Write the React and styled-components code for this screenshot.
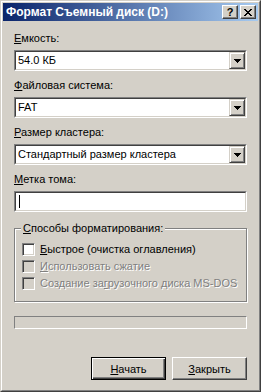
import React from "react";
import styled, { createGlobalStyle } from "styled-components";

const GlobalStyle = createGlobalStyle`
  html, body {
    margin: 0;
    padding: 0;
    background: #d4d0c8;
  }
  * {
    box-sizing: border-box;
  }
`;

const Window = styled.div`
  width: 261px;
  height: 392px;
  background: #d4d0c8;
  border: 1px solid;
  border-color: #d4d0c8 #404040 #404040 #d4d0c8;
  font-family: "Liberation Sans", Arial, sans-serif;
  font-size: 11px;
  color: #000;
`;

const Frame = styled.div`
  height: 100%;
  border: 1px solid;
  border-color: #ffffff #808080 #808080 #ffffff;
  padding: 1px;
  display: flex;
  flex-direction: column;
`;

const TitleBar = styled.div`
  height: 18px;
  flex: none;
  display: flex;
  align-items: center;
  padding: 0 2px 0 3px;
  background: linear-gradient(to right, #0a246a, #a6caf0);
  color: #fff;
  font-weight: 700;
  font-size: 12px;
`;

const TitleText = styled.span`
  flex: 1;
  white-space: nowrap;
  line-height: 18px;
`;

const CaptionButton = styled.button`
  width: 16px;
  height: 14px;
  padding: 0;
  margin-left: ${(p) => (p.$gap ? "2px" : "0")};
  background: #d4d0c8;
  border: 1px solid;
  border-color: #ffffff #404040 #404040 #ffffff;
  box-shadow: inset -1px -1px 0 #808080;
  display: flex;
  align-items: center;
  justify-content: center;
  font-family: "Liberation Sans", Arial, sans-serif;
  font-weight: 700;
  font-size: 11px;
  line-height: 12px;
  color: #000;
`;

const Client = styled.div`
  flex: 1;
  margin-top: 1px;
  padding: 10px 11px 0 11px;
  display: flex;
  flex-direction: column;
`;

const Field = styled.div`
  display: flex;
  flex-direction: column;
  gap: 5px;
  margin-bottom: 8px;
`;

const Label = styled.div`
  height: 13px;
  line-height: 13px;
  white-space: nowrap;
  color: ${(p) => (p.$disabled ? "#808080" : "#000")};
  text-shadow: ${(p) => (p.$disabled ? "1px 1px 0 #fff" : "none")};
`;

const Sunken = styled.div`
  height: 21px;
  border: 1px solid;
  border-color: #808080 #ffffff #ffffff #808080;
  background: #fff;
`;

const SunkenInner = styled.div`
  height: 100%;
  border: 1px solid;
  border-color: #404040 #d4d0c8 #d4d0c8 #404040;
  display: flex;
  align-items: center;
`;

const ComboValue = styled.span`
  flex: 1;
  padding-left: 2px;
  line-height: 13px;
  white-space: nowrap;
`;

const DropButton = styled.div`
  width: 16px;
  height: 17px;
  background: #d4d0c8;
  border: 1px solid;
  border-color: #d4d0c8 #404040 #404040 #d4d0c8;
  box-shadow: inset 1px 1px 0 #fff, inset -1px -1px 0 #808080;
  display: flex;
  align-items: center;
  justify-content: center;
`;

const Caret = styled.span`
  width: 1px;
  height: 13px;
  margin-left: 3px;
  background: #000;
`;

const Group = styled.div`
  position: relative;
  margin-top: 8px;
  height: 74px;
  border: 1px solid #808080;
  box-shadow: inset 1px 1px 0 #fff, 1px 1px 0 #fff;
  padding: 12px 0 0 7px;
  display: flex;
  flex-direction: column;
`;

const Legend = styled.span`
  position: absolute;
  top: -7px;
  left: 6px;
  padding: 0 2px;
  background: #d4d0c8;
  line-height: 13px;
  white-space: nowrap;
`;

const CheckRow = styled.div`
  height: 17px;
  display: flex;
  align-items: center;
  gap: 5px;
`;

const CheckBox = styled.span`
  width: 13px;
  height: 13px;
  flex: none;
  border: 1px solid;
  border-color: #808080 #ffffff #ffffff #808080;
  background: ${(p) => (p.$disabled ? "#d4d0c8" : "#fff")};
  box-shadow: inset 1px 1px 0 #404040, inset -1px -1px 0 #d4d0c8;
`;

const Progress = styled.div`
  margin-top: 14px;
  height: 13px;
  border: 1px solid;
  border-color: #808080 #ffffff #ffffff #808080;
`;

const ButtonRow = styled.div`
  margin-top: 28px;
  display: flex;
  justify-content: flex-end;
  gap: 6px;
`;

const Button = styled.button`
  width: 75px;
  height: 23px;
  padding: 0;
  background: #d4d0c8;
  font-family: "Liberation Sans", Arial, sans-serif;
  font-size: 11px;
  color: #000;
  border: 1px solid;
  border-color: ${(p) =>
    p.$default ? "#000" : "#ffffff #404040 #404040 #ffffff"};
  box-shadow: ${(p) =>
    p.$default
      ? "inset 1px 1px 0 #fff, inset -1px -1px 0 #404040, inset -2px -2px 0 #808080"
      : "inset -1px -1px 0 #808080"};
`;

const Arrow = () => (
  <svg width="7" height="4" viewBox="0 0 7 4" shapeRendering="crispEdges">
    <rect x="0" y="0" width="7" height="1" fill="#000" />
    <rect x="1" y="1" width="5" height="1" fill="#000" />
    <rect x="2" y="2" width="3" height="1" fill="#000" />
    <rect x="3" y="3" width="1" height="1" fill="#000" />
  </svg>
);

const CloseGlyph = () => {
  const rows = [
    [0, 1, 6, 7],
    [1, 2, 5, 6],
    [2, 3, 4, 5],
    [3, 4],
    [2, 3, 4, 5],
    [1, 2, 5, 6],
    [0, 1, 6, 7],
  ];
  return (
    <svg width="8" height="7" viewBox="0 0 8 7" shapeRendering="crispEdges">
      {rows.map((cols, y) =>
        cols.map((x) => (
          <rect key={`${x}-${y}`} x={x} y={y} width="1" height="1" fill="#000" />
        ))
      )}
    </svg>
  );
};

const Combo = ({ value }) => (
  <Sunken>
    <SunkenInner>
      <ComboValue>{value}</ComboValue>
      <DropButton>
        <Arrow />
      </DropButton>
    </SunkenInner>
  </Sunken>
);

const options = [
  { key: "quick", label: <><u>Б</u>ыстрое (очистка оглавления)</>, disabled: false },
  { key: "compress", label: <><u>И</u>спользовать сжатие</>, disabled: true },
  { key: "boot", label: <>Создание за<u>г</u>рузочного диска MS-DOS</>, disabled: true },
];

const App = () => (
  <>
    <GlobalStyle />
    <Window>
      <Frame>
        <TitleBar>
          <TitleText>Формат Съемный диск (D:)</TitleText>
          <CaptionButton>?</CaptionButton>
          <CaptionButton $gap>
            <CloseGlyph />
          </CaptionButton>
        </TitleBar>
        <Client>
          <Field>
            <Label>
              <u>Е</u>мкость:
            </Label>
            <Combo value="54.0 КБ" />
          </Field>
          <Field>
            <Label>
              <u>Ф</u>айловая система:
            </Label>
            <Combo value="FAT" />
          </Field>
          <Field>
            <Label>
              <u>Р</u>азмер кластера:
            </Label>
            <Combo value="Стандартный размер кластера" />
          </Field>
          <Field>
            <Label>
              <u>М</u>етка тома:
            </Label>
            <Sunken>
              <SunkenInner>
                <Caret />
              </SunkenInner>
            </Sunken>
          </Field>
          <Group>
            <Legend>
              <u>С</u>пособы форматирования:
            </Legend>
            {options.map((o) => (
              <CheckRow key={o.key}>
                <CheckBox $disabled={o.disabled} />
                <Label $disabled={o.disabled}>{o.label}</Label>
              </CheckRow>
            ))}
          </Group>
          <Progress />
          <ButtonRow>
            <Button $default>
              <u>Н</u>ачать
            </Button>
            <Button>
              <u>З</u>акрыть
            </Button>
          </ButtonRow>
        </Client>
      </Frame>
    </Window>
  </>
);

export default App;
